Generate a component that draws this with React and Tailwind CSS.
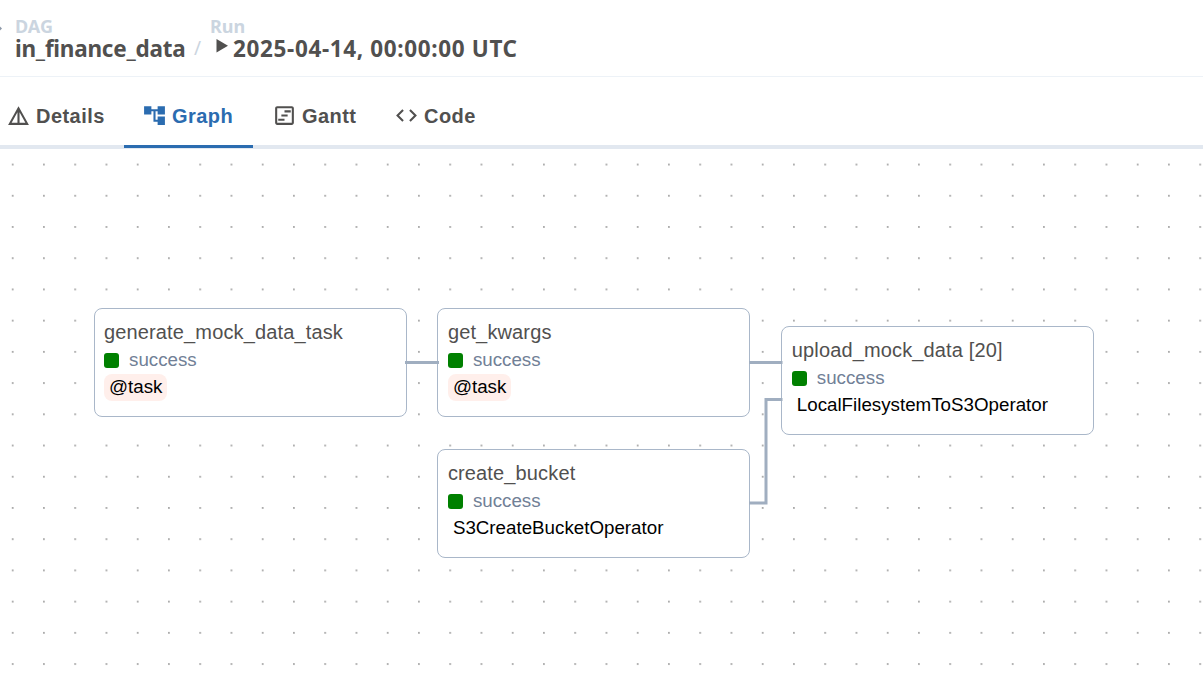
import { MdDetails, MdAccountTree, MdOutlineViewTimeline, MdCode } from "react-icons/md";

const tabs = [
  { label: "Details", Icon: MdDetails, box: "w-[124px] pl-[6px]" },
  { label: "Graph", Icon: MdAccountTree, box: "w-[129px] pl-[18px]", active: true },
  { label: "Gantt", Icon: MdOutlineViewTimeline, box: "w-[123px] pl-[19px]" },
  { label: "Code", Icon: MdCode, box: "w-[119px] pl-[18px]" },
];

const nodes = [
  { name: "generate_mock_data_task", operator: "@task", tinted: true, place: "left-[93.5px] top-[159px]" },
  { name: "get_kwargs", operator: "@task", tinted: true, place: "left-[437.4px] top-[159px]" },
  { name: "create_bucket", operator: "S3CreateBucketOperator", place: "left-[437.4px] top-[300px]" },
  { name: "upload_mock_data [20]", operator: "LocalFilesystemToS3Operator", place: "left-[781.3px] top-[177px]" },
];

function TaskNode({ name, operator, tinted, place }) {
  return (
    <div className={`absolute ${place} h-[109px] w-[313px] rounded-[8px] border border-[#a9b7c9] bg-white pl-[9.5px] pt-[9px]`}>
      <div className="h-[30px] whitespace-nowrap text-[20px] leading-[29px] tracking-[0.14px] text-[#51504f]">{name}</div>
      <div className="flex h-[25px] items-center">
        <span className="h-[15px] w-[15px] rounded-[3px] bg-[#008000]" />
        <span className="-mt-[2px] ml-[10px] text-[18.75px] leading-[25px] text-[#718096]">success</span>
      </div>
      <div className={`mt-px inline-block h-[27px] whitespace-nowrap rounded-[8px] px-[5px] text-[18.75px] leading-[26px] text-black ${tinted ? "bg-[#ffefeb]" : ""}`}>
        {operator}
      </div>
    </div>
  );
}

export default function App() {
  return (
    <div className="flex h-[676px] w-[1203px] flex-col overflow-hidden bg-white font-['Liberation_Sans',Arial,sans-serif] text-[#51504f]">
      <header className="flex h-[77px] shrink-0 border-b border-[#edf2f7] pt-[15px] font-['Noto_Sans',sans-serif] font-bold">
        <svg className="mt-[9px] h-[9px] w-[3px] shrink-0" viewBox="0 0 3 9">
          <path d="M0 2.5 L2 4.5 L0 6.5Z" fill="#8d99a9" />
        </svg>
        <div className="w-[178px] shrink-0 pl-[12px]">
          <div className="text-[18px] leading-[22px] text-[#cbd5e0]">DAG</div>
          <div className="whitespace-nowrap text-[22.5px] leading-[23px] tracking-[-0.24px]">in_finance_data</div>
        </div>
        <span className="mt-[22px] w-[29px] shrink-0 pl-[13px] text-[19px] font-normal leading-[22px] text-[#cbd5e0]">/</span>
        <div>
          <div className="text-[18px] leading-[22px] text-[#cbd5e0]">Run</div>
          <div className="flex whitespace-nowrap text-[22.5px] leading-[23px]">
            <svg className="ml-[6px] mt-[2px] h-[14px] w-[17px]" viewBox="0 0 17 14">
              <path d="M0.5 0 L12 6.8 L0.5 13.6Z" fill="#51504f" />
            </svg>
            <span className="tracking-[0.64px]">2025-04-14, 00:00:00 UTC</span>
          </div>
        </div>
      </header>

      <nav className="flex h-[72px] shrink-0 border-b-4 border-[#e2e8f0]">
        {tabs.map(({ label, Icon, box, active }) => (
          <div
            key={label}
            className={`flex h-[71px] shrink-0 items-center gap-[5px] border-b-[3px] pt-[9px] ${box} ${
              active ? "border-[#2b6cb0] text-[#2b6cb0]" : "border-transparent"
            }`}
          >
            <Icon className="-mt-px h-[25px] w-[25px] shrink-0" />
            <span className="pt-px text-[20px] font-bold leading-[24px] tracking-[0.45px]">{label}</span>
          </div>
        ))}
      </nav>

      <main className="relative flex-1">
        <svg className="absolute inset-0 h-full w-full">
          <defs>
            <pattern id="dots" x="11.8" y="14.6" width="31.25" height="31.22" patternUnits="userSpaceOnUse">
              <circle cx="0.9" cy="0.9" r="0.85" fill="#858585" />
            </pattern>
          </defs>
          <rect width="100%" height="100%" fill="url(#dots)" />
        </svg>
        {nodes.map((node) => (
          <TaskNode key={node.name} {...node} />
        ))}
        <svg className="absolute inset-0 h-full w-full" fill="none" stroke="#a0aec0" strokeWidth="3">
          <path d="M405 213.5H439" />
          <path d="M749 213.5H782.5" />
          <path d="M749 354H766V250.5H782.5" />
        </svg>
      </main>
    </div>
  );
}
